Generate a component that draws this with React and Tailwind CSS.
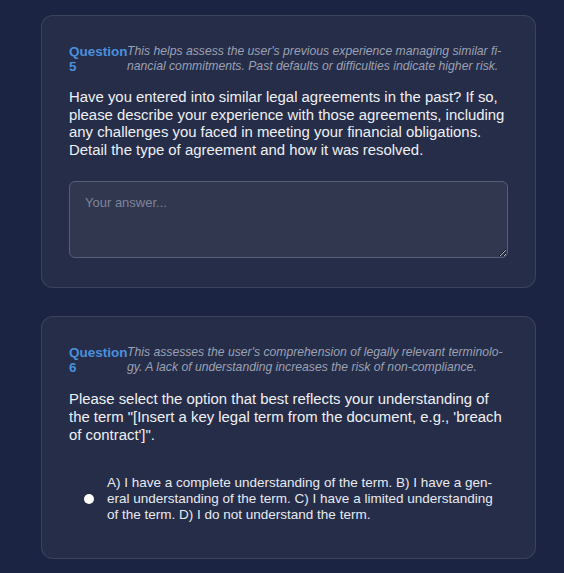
import React from "react";

const font = { fontFamily: '"Liberation Sans", Arial, sans-serif' };

function Header({ n, children }) {
  return (
    <div className="flex items-start">
      <div className="shrink-0 w-[58px] text-[13.5px] font-bold leading-[15px] text-[#4a90dc]">
        Question {n}
      </div>
      <div lang="en" className="min-w-0 flex-1 text-[12.2px] italic leading-[15px] text-[#9aa1b4] [hyphens:manual]">
        {children}
      </div>
    </div>
  );
}

export default function App() {
  return (
    <div style={font} className="min-h-[573px] bg-[#1b2442] pt-[15px] pl-[41px]">
      <div className="w-[495px] flex flex-col gap-[28px]">
        <div className="rounded-[12px] border border-white/10 bg-[#262d48] px-[27px] pt-[28px] pb-[29px]">
          <Header n={5}>
            This helps assess the user's previous experience managing similar fi{"\u00AD"}nancial commitments. Past defaults or difficulties indicate higher risk.
          </Header>
          <p className="mt-[15px] text-[14.9px] leading-[17.7px] text-[#eef0f4]">
            Have you entered into similar legal agreements in the past? If so, please describe your experience with those agreements, including any challenges you faced in meeting your financial obligations. Detail the type of agreement and how it was resolved.
          </p>
          <textarea
            placeholder="Your answer..."
            className="mt-[21px] block w-full h-[77px] rounded-[6px] border border-[#575e76] bg-[#30374f] px-[15px] py-[13px] text-[13px] leading-[15px] text-[#e5e7eb] placeholder:text-[#7f8598] outline-none"
          />
        </div>

        <div className="rounded-[12px] border border-white/10 bg-[#262d48] px-[27px] pt-[28px] pb-[35px]">
          <Header n={6}>
            This assesses the user's comprehension of legally relevant terminolo{"\u00AD"}gy. A lack of understanding increases the risk of non-compliance.
          </Header>
          <p className="mt-[15px] text-[14.9px] leading-[18px] text-[#eef0f4]">
            Please select the option that best reflects your understanding of the term "[Insert a key legal term from the document, e.g., 'breach of contract']".
          </p>
          <label className="mt-[31px] flex items-center gap-[13px] pl-[15px] pr-[6px]">
            <span className="shrink-0 block h-[10px] w-[10px] rounded-full bg-white" />
            <span lang="en" className="text-[13.5px] leading-[16px] text-[#e8eaf0] [hyphens:manual]">
              A) I have a complete understanding of the term. B) I have a gen{"\u00AD"}eral understanding of the term. C) I have a limited understanding of the term. D) I do not understand the term.
            </span>
          </label>
        </div>
      </div>
    </div>
  );
}
